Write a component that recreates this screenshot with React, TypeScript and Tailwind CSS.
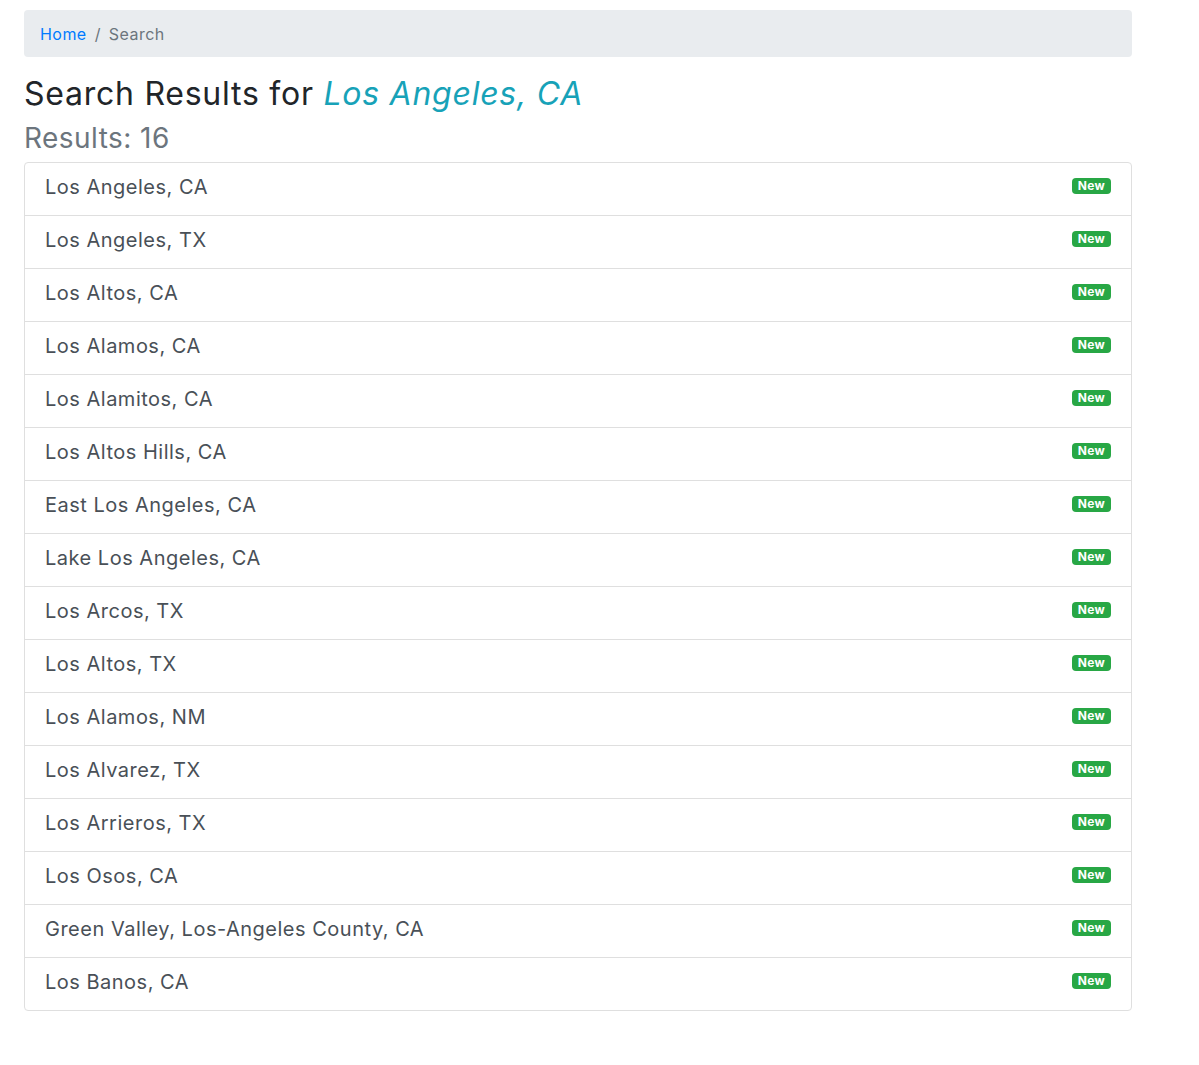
const results = [
  'Los Angeles, CA',
  'Los Angeles, TX',
  'Los Altos, CA',
  'Los Alamos, CA',
  'Los Alamitos, CA',
  'Los Altos Hills, CA',
  'East Los Angeles, CA',
  'Lake Los Angeles, CA',
  'Los Arcos, TX',
  'Los Altos, TX',
  'Los Alamos, NM',
  'Los Alvarez, TX',
  'Los Arrieros, TX',
  'Los Osos, CA',
  'Green Valley, Los-Angeles County, CA',
  'Los Banos, CA',
]

export default function App() {
  return (
    <div className="min-h-screen bg-white font-['Inter',sans-serif] pt-[10px] pl-[24px]">
      <div className="w-[1108px]">
        {/* Breadcrumb */}
        <nav className="flex items-center h-[47px] rounded bg-[#e9ecef] px-4 text-[16px] tracking-[0.45px] mb-4">
          <a href="#" className="text-[#007bff]">Home</a>
          <span className="px-2 text-[#6c757d]">/</span>
          <span className="text-[#6c757d]">Search</span>
        </nav>

        <h2 className="pt-[2px] text-[32px] leading-[1.2] tracking-[0.75px] text-[#212529] mb-2">
          Search Results for <em className="text-[#17a2b8]">Los Angeles, CA</em>
        </h2>
        <h3 className="pt-[1px] text-[28px] leading-[1.2] tracking-[0.45px] text-[#6c757d] mb-[6px]">Results: 16</h3>

        {/* Result list */}
        <ul className="border border-[#dfdfdf] rounded">
          {results.map((r, i) => (
            <li
              key={r}
              className={`flex justify-between items-start px-5 pt-[11px] ${i > 0 ? 'h-[53px] border-t border-[#dfdfdf]' : 'h-[52px]'}`}
            >
              <span className="text-[20px] leading-[26px] tracking-[0.5px] text-[#495057]">{r}</span>
              <span className="mt-[4px] rounded bg-[#28a745] px-[6px] text-[12px] leading-[16px] tracking-[0.3px] font-bold text-white">New</span>
            </li>
          ))}
        </ul>
      </div>
    </div>
  )
}
